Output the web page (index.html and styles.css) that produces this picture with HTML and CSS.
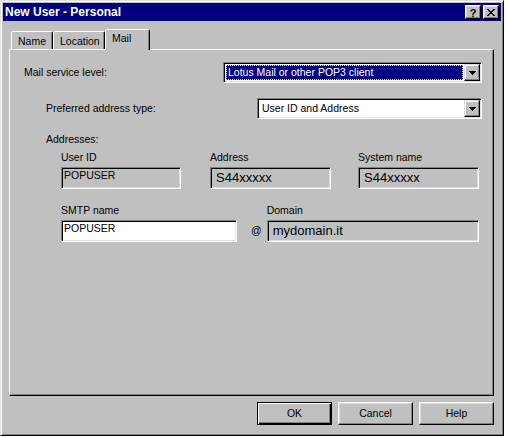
FILE: index.html
```html
<!DOCTYPE html>
<html>
<head>
<meta charset="utf-8">
<title>New User - Personal</title>
<link rel="stylesheet" href="styles.css">
</head>
<body>
<div class="window">
  <div class="titlebar">
    <span class="title">New User - Personal</span>
    <div class="tbtns">
      <div class="tbtn help">?</div>
      <div class="tbtn close">
        <svg width="8" height="7" viewBox="0 0 8 7" shape-rendering="crispEdges"><path d="M0 0h2v1h-2zM6 0h2v1h-2zM1 1h2v1h-2zM5 1h2v1h-2zM2 2h4v1h-4zM3 3h2v1h-2zM2 4h4v1h-4zM1 5h2v1h-2zM5 5h2v1h-2zM0 6h2v1h-2zM6 6h2v1h-2z" fill="#000"/></svg>
      </div>
    </div>
  </div>
  <div class="client">
    <div class="tabs">
      <div class="tab t-name">Name</div>
      <div class="tab t-loc">Location</div>
      <div class="tab t-mail active">Mail</div>
    </div>
    <div class="panel">
      <div class="row">
        <span class="lbl">Mail service level:</span>
        <div class="combo c1">
          <div class="cval sel">Lotus Mail or other POP3 client</div>
          <div class="cbtn"><svg width="7" height="4" viewBox="0 0 7 4" shape-rendering="crispEdges"><path d="M0 0h7v1h-7zM1 1h5v1h-5zM2 2h3v1h-3zM3 3h1v1h-1z" fill="#000"/></svg></div>
        </div>
      </div>
      <div class="row r2">
        <span class="lbl">Preferred address type:</span>
        <div class="combo c2">
          <div class="cval">User ID and Address</div>
          <div class="cbtn"><svg width="7" height="4" viewBox="0 0 7 4" shape-rendering="crispEdges"><path d="M0 0h7v1h-7zM1 1h5v1h-5zM2 2h3v1h-3zM3 3h1v1h-1z" fill="#000"/></svg></div>
        </div>
      </div>
      <div class="group">
        <div class="lbl">Addresses:</div>
        <div class="addr-row">
          <div class="col w120">
            <div class="lbl">User ID</div>
            <div class="field ro small">POPUSER</div>
          </div>
          <div class="col w121 c-addr">
            <div class="lbl">Address</div>
            <div class="field ro big">S44xxxxx</div>
          </div>
          <div class="col w121 c-sys">
            <div class="lbl">System name</div>
            <div class="field ro big">S44xxxxx</div>
          </div>
        </div>
        <div class="smtp-row">
          <div class="col w176">
            <div class="lbl">SMTP name</div>
            <div class="field edit small">POPUSER</div>
          </div>
          <div class="at">@</div>
          <div class="col w212">
            <div class="lbl">Domain</div>
            <div class="field ro big">mydomain.it</div>
          </div>
        </div>
      </div>
    </div>
    <div class="buttons">
      <div class="btn default">OK</div>
      <div class="btn">Cancel</div>
      <div class="btn">Help</div>
    </div>
  </div>
</div>
</body>
</html>
```

FILE: styles.css
```css
* {
  box-sizing: border-box;
}

body {
  margin: 0;
  background: #ffffff;
  font-family: "Liberation Sans", Arial, sans-serif;
  font-size: 10.5px;
  color: #000000;
}

.window {
  width: 504px;
  height: 436px;
  background: #c0c0c0;
  border: 1px solid;
  border-color: #dfdfdf #000000 #000000 #dfdfdf;
  box-shadow: inset 1px 1px #ffffff, inset -1px -1px #808080;
  padding: 2px;
  display: flex;
  flex-direction: column;
}

.titlebar {
  height: 18px;
  flex: none;
  background: #000080;
  display: flex;
  align-items: center;
  justify-content: space-between;
  padding: 0 2px;
}

.title {
  color: #ffffff;
  font-weight: bold;
  font-size: 12px;
  line-height: 18px;
  white-space: nowrap;
}

.tbtns {
  display: flex;
  gap: 2px;
}

.tbtn {
  width: 16px;
  height: 14px;
  background: #c0c0c0;
  border: 1px solid;
  border-color: #ffffff #000000 #000000 #ffffff;
  box-shadow: inset -1px -1px #808080, inset 1px 1px #dfdfdf;
  display: flex;
  align-items: center;
  justify-content: center;
}

.tbtn.help {
  font-weight: bold;
  font-size: 11px;
  line-height: 12px;
  padding-top: 1px;
}

.client {
  padding: 8px 0 0 6px;
  display: flex;
  flex-direction: column;
  align-items: flex-start;
}

.tabs {
  display: flex;
  align-items: flex-end;
  height: 21px;
  margin: 0 0 -1px 2px;
  position: relative;
  z-index: 1;
}

.tab {
  height: 18px;
  margin-bottom: 1px;
  border: 1px solid;
  border-bottom: none;
  border-color: #ffffff #000000 transparent #ffffff;
  border-radius: 2px 2px 0 0;
  box-shadow: inset -1px 0 #808080;
  padding: 3px 0 0 6px;
  line-height: 13px;
  background: #c0c0c0;
  white-space: nowrap;
}

.tab.active {
  height: 21px;
  margin-bottom: 0;
  padding-top: 2px;
}

.t-name { width: 42px; }
.t-loc { width: 52px; }
.t-mail { width: 45px; }

.panel {
  width: 485px;
  height: 347px;
  border: 1px solid;
  border-color: #ffffff #000000 #000000 #ffffff;
  box-shadow: inset -1px -1px #808080;
  padding: 12px 11px 0 14px;
}

.lbl {
  line-height: 13px;
  white-space: nowrap;
}

.row {
  display: flex;
  align-items: center;
  justify-content: space-between;
}

.r2 {
  margin-top: 15px;
  margin-left: 22px;
}

.combo {
  height: 21px;
  background: #ffffff;
  border: 1px solid;
  border-color: #808080 #ffffff #ffffff #808080;
  box-shadow: inset 1px 1px #000000, inset -1px -1px #dfdfdf;
  padding: 1px;
  display: flex;
}

.c1 { width: 259px; }
.c2 { width: 225px; }

.cval {
  flex: 1;
  margin: 1px;
  border: 1px dotted transparent;
  padding-left: 1px;
  line-height: 13px;
  white-space: nowrap;
  overflow: hidden;
}

.cval.sel {
  background: #000080;
  color: #ffffff;
  border-color: #ffff00;
}

.cbtn {
  width: 16px;
  height: 17px;
  flex: none;
  background: #c0c0c0;
  border: 1px solid;
  border-color: #dfdfdf #000000 #000000 #dfdfdf;
  box-shadow: inset -1px -1px #808080, inset 1px 1px #ffffff;
  display: flex;
  align-items: center;
  justify-content: center;
}

.group {
  margin-top: 14px;
  margin-left: 22px;
}

.addr-row {
  display: flex;
  margin: 5px 0 0 15px;
}

.smtp-row {
  display: flex;
  align-items: flex-end;
  margin: 15px 0 0 15px;
}

.col {
  display: flex;
  flex-direction: column;
  gap: 3px;
}

.w120 { width: 120px; }
.w121 { width: 121px; }
.w176 { width: 176px; }
.w212 { width: 212px; }

.c-addr { margin-left: 29px; }
.c-sys { margin-left: 27px; }

.field {
  height: 22px;
  border: 1px solid;
  border-color: #808080 #ffffff #ffffff #808080;
  box-shadow: inset 1px 1px #000000, inset -1px -1px #dfdfdf;
  white-space: nowrap;
  overflow: hidden;
}

.field.ro { background: #c0c0c0; }
.field.edit { background: #ffffff; }

.field.small {
  padding: 1px 0 0 2px;
  line-height: 13px;
}

.field.big {
  padding-left: 5px;
  font-size: 13px;
  line-height: 20px;
}

.at {
  height: 22px;
  padding-top: 4px;
  line-height: 13px;
  margin: 0 5px 0 14px;
}

.buttons {
  width: 485px;
  margin-top: 6px;
  display: flex;
  justify-content: flex-end;
  gap: 6px;
}

.btn {
  width: 75px;
  height: 23px;
  background: #c0c0c0;
  border: 1px solid;
  border-color: #ffffff #000000 #000000 #ffffff;
  box-shadow: inset -1px -1px #808080, inset 1px 1px #dfdfdf;
  text-align: center;
  line-height: 21px;
}

.btn.default {
  border-color: #000000;
  box-shadow: inset 1px 1px #ffffff, inset -1px -1px #000000, inset -2px -2px #808080;
}
```
